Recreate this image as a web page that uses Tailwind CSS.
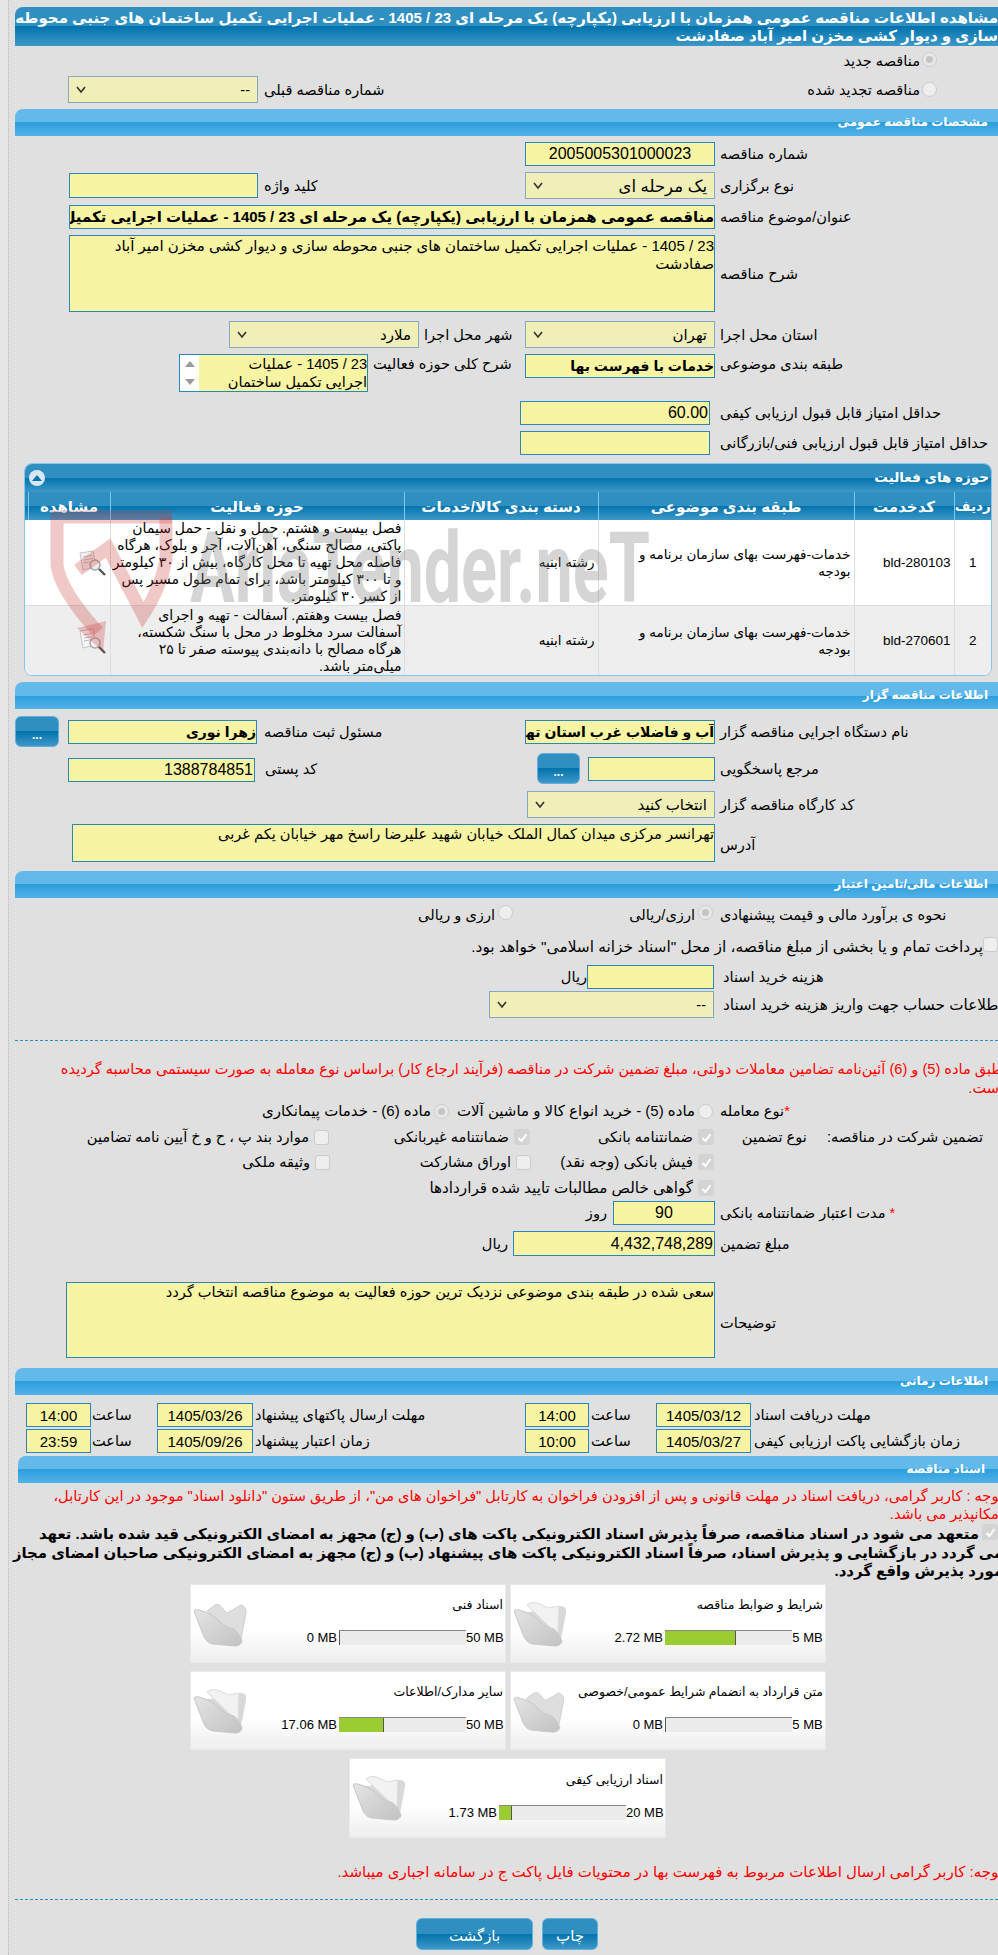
<!DOCTYPE html>
<html lang="fa" dir="rtl">
<head>
<meta charset="UTF-8">
<title>مشاهده اطلاعات مناقصه</title>
<script src="https://cdn.jsdelivr.net/npm/@tailwindcss/browser@4"></script>
</head>
<body class="bg-[#e6e6e6] overflow-hidden w-[998px] h-[1955px] relative font-['Liberation_Sans','DejaVu_Sans',sans-serif] text-[14.6px] text-black leading-[18px]">
<div dir="ltr" class="w-[998px] h-[1955px] overflow-hidden">
<div dir="rtl" class="ml-[8px] w-[995px] h-[1955px] border-l border-dotted border-[#bbbbbb] bg-[#e0e0e0] pl-[6px] pt-[7px]">
<div class="w-[988px]">

  <!-- title -->
  <div class="h-[39px] rounded-tl-[8px] bg-[linear-gradient(#2f8fc1_0%,#2f8fc1_50%,#0273ad_50%,#3e98c8_100%)] text-white font-bold text-[15px] leading-[18px] whitespace-nowrap pt-[2px] pr-[5px]">
    <div>مشاهده اطلاعات مناقصه عمومی همزمان با ارزیابی (یکپارچه) یک مرحله ای 23 / 1405 - عملیات اجرایی تکمیل ساختمان های جنبی محوطه</div>
    <div>سازی و دیوار کشی مخزن امیر آباد صفادشت</div>
  </div>

  <!-- new / renewed -->
  <div class="flex items-center h-[15px] mt-[6px] pr-[66px]">
    <span class="w-[15px] h-[15px] rounded-full border border-[#cccccc] bg-[#e8e8e8] flex items-center justify-center"><span class="w-[7px] h-[7px] rounded-full bg-[#c4c4c4]"></span></span>
    <span class="mr-[2px] mt-[3px]">مناقصه جدید</span>
  </div>
  <div class="flex items-center h-[27px] mt-[9px]">
    <div class="w-[283px] flex items-center pr-[66px]">
      <span class="w-[15px] h-[15px] rounded-full border border-[#cccccc] bg-[#eeeeee]"></span>
      <span class="mr-[2px] whitespace-nowrap">مناقصه تجدید شده</span>
    </div>
    <div class="w-[196px]"></div>
    <div class="w-[260px] text-left">شماره مناقصه قبلی</div>
    <div class="mr-[6px] w-[190px] h-[27px] border border-[#86a9c0] bg-[#f0efb8] flex items-center justify-between px-[7px]"><span>--</span><svg class="w-[10px] h-[8px]" viewBox="0 0 10 8"><path d="M1 1l4 5 4-5" fill="none" stroke="#333" stroke-width="1.6"/></svg></div>
  </div>

  <!-- general -->
  <div class="h-[27px] mt-[6px] rounded-tl-[8px] bg-[linear-gradient(#62b9ea_0%,#62b9ea_50%,#2c9edb_50%,#52b2e8_100%)] text-white font-bold text-[12px] leading-[27px] pr-[15px]">مشخصات مناقصه عمومی</div>

  <div class="flex items-center h-[24px] mt-[6px]">
    <div class="w-[283px] text-left">شماره مناقصه</div>
    <input readonly value="2005005301000023" class="mr-[5px] w-[190px] h-[24px] border border-[#2d86b8] bg-[#f7f4a3] text-center text-[16px]">
  </div>
  <div class="flex items-center h-[27px] mt-[6px]">
    <div class="w-[283px] text-left">نوع برگزاری</div>
    <div class="mr-[5px] w-[190px] h-[27px] border border-[#86a9c0] bg-[#f0efb8] flex items-center justify-between px-[7px] text-[16.5px]"><span>یک مرحله ای</span><svg class="w-[10px] h-[8px]" viewBox="0 0 10 8"><path d="M1 1l4 5 4-5" fill="none" stroke="#333" stroke-width="1.6"/></svg></div>
    <div class="w-[261px] text-left">کلید واژه</div>
    <input readonly class="mr-[6px] w-[189px] h-[25px] border border-[#2d86b8] bg-[#f7f4a3]">
  </div>
  <div class="flex items-center h-[24px] mt-[6px]">
    <div class="w-[283px] text-left">عنوان/موضوع مناقصه</div>
    <input readonly value="مناقصه عمومی همزمان با ارزیابی (یکپارچه) یک مرحله ای 23 / 1405 - عملیات اجرایی تکمیل ساختمان های جنبی محوطه سازی" class="mr-[5px] w-[646px] h-[24px] border border-[#2d86b8] bg-[#f7f4a3] font-bold text-[15px]">
  </div>
  <div class="flex items-center h-[77px] mt-[6px]">
    <div class="w-[283px] text-left">شرح مناقصه</div>
    <div class="mr-[5px] w-[646px] h-[77px] border border-[#2d86b8] bg-[#f7f4a3] text-[15px] leading-[18px] pt-[1px]">23 / 1405 - عملیات اجرایی تکمیل ساختمان های جنبی محوطه سازی و دیوار کشی مخزن امیر آباد<br>صفادشت</div>
  </div>
  <div class="flex items-center h-[27px] mt-[9px]">
    <div class="w-[283px] text-left">استان محل اجرا</div>
    <div class="mr-[5px] w-[190px] h-[27px] border border-[#86a9c0] bg-[#f0efb8] flex items-center justify-between px-[7px] text-[15px]"><span>تهران</span><svg class="w-[10px] h-[8px]" viewBox="0 0 10 8"><path d="M1 1l4 5 4-5" fill="none" stroke="#333" stroke-width="1.6"/></svg></div>
    <div class="w-[101px] text-left whitespace-nowrap">شهر محل اجرا</div>
    <div class="mr-[5px] w-[190px] h-[27px] border border-[#86a9c0] bg-[#f0efb8] flex items-center justify-between px-[7px] text-[15px]"><span>ملارد</span><svg class="w-[10px] h-[8px]" viewBox="0 0 10 8"><path d="M1 1l4 5 4-5" fill="none" stroke="#333" stroke-width="1.6"/></svg></div>
  </div>
  <div class="flex items-start h-[38px] mt-[6px]">
    <div class="w-[283px] text-left pt-[1px]">طبقه بندی موضوعی</div>
    <input readonly value="خدمات با فهرست بها" class="mr-[5px] w-[190px] h-[24px] border border-[#2d86b8] bg-[#f7f4a3] font-bold text-[14px]">
    <div class="w-[152px] text-left pt-[1px] whitespace-nowrap">شرح کلی حوزه فعالیت</div>
    <div dir="rtl" class="mr-[5px] w-[189px] h-[38px] border border-[#2d86b8] bg-[#f7f4a3] flex overflow-hidden">
      <div class="flex-1 leading-[18px] whitespace-nowrap">23 / 1405 - عملیات<br>اجرایی تکمیل ساختمان</div>
      <div class="w-[19px] bg-white flex flex-col justify-between items-center py-[6px]">
        <svg class="w-[10px] h-[6px]" viewBox="0 0 10 6"><path d="M5 0l5 6H0z" fill="#9a9a9a"/></svg>
        <svg class="w-[10px] h-[6px]" viewBox="0 0 10 6"><path d="M5 6L0 0h10z" fill="#9a9a9a"/></svg>
      </div>
    </div>
  </div>
  <div class="flex items-center h-[24px] mt-[9px]">
    <div class="w-[283px] text-left">حداقل امتیاز قابل قبول ارزیابی کیفی</div>
    <input readonly value="60.00" class="mr-[10px] w-[190px] h-[24px] border border-[#2d86b8] bg-[#f7f4a3] text-right text-[16px] px-[1px]">
  </div>
  <div class="flex items-center h-[24px] mt-[6px]">
    <div class="w-[283px] text-left whitespace-nowrap">حداقل امتیاز قابل قبول ارزیابی فنی/بازرگانی</div>
    <input readonly class="mr-[10px] w-[190px] h-[24px] border border-[#2d86b8] bg-[#f7f4a3]">
  </div>

  <!-- activities panel -->
  <div class="mt-[8px] mr-[11px] w-[968px] h-[213px] border border-[#86c6ea] rounded-[8px] overflow-hidden bg-white">
    <div class="h-[28px] bg-[linear-gradient(#2f8fc1_0%,#2f8fc1_50%,#0273ad_50%,#3e98c8_100%)] text-white font-bold text-[13.5px] leading-[28px] flex items-center justify-between pr-[2px] pl-[4px]">
      <span>حوزه های فعالیت</span>
      <span class="w-[16px] h-[16px] rounded-full bg-[#d6e7f5] flex items-center justify-center"><svg class="w-[10px] h-[6px]" viewBox="0 0 10 6"><path d="M5 0l5 6H0z" fill="#0b74ad"/></svg></span>
    </div>
    <table class="w-[966px] table-fixed border-collapse text-[13.5px] leading-[17px]">
      <colgroup><col class="w-[37px]"><col class="w-[100px]"><col class="w-[256px]"><col class="w-[194px]"><col class="w-[294px]"><col class="w-[82px]"><col class="w-[3px]"></colgroup>
      <thead class="bg-[linear-gradient(#2f8fc1_0%,#2f8fc1_50%,#0273ad_50%,#3e98c8_100%)] text-white text-[15px]">
        <tr class="h-[28px]">
          <th class="border-l border-[#7cc8f0] font-bold whitespace-nowrap text-[13.5px]">ردیف</th>
          <th class="border-l border-[#7cc8f0] font-bold whitespace-nowrap">کدخدمت</th>
          <th class="border-l border-[#7cc8f0] font-bold whitespace-nowrap">طبقه بندی موضوعی</th>
          <th class="border-l border-[#7cc8f0] font-bold whitespace-nowrap">دسته بندی کالا/خدمات</th>
          <th class="border-l border-[#7cc8f0] font-bold whitespace-nowrap">حوزه فعالیت</th>
          <th class="border-l border-[#7cc8f0] font-bold whitespace-nowrap">مشاهده</th>
          <th></th>
        </tr>
      </thead>
      <tbody>
        <tr class="h-[85px] bg-white border-b border-[#dddddd]">
          <td class="border-l border-[#dddddd] text-center">1</td>
          <td dir="ltr" class="border-l border-[#dddddd] text-right pr-[3px]">bld-280103</td>
          <td class="border-l border-[#dddddd] pr-[3px]">خدمات-فهرست بهای سازمان برنامه و<br>بودجه</td>
          <td class="border-l border-[#dddddd] pr-[3px]">رشته ابنیه</td>
          <td class="border-l border-[#dddddd] pr-[2px] whitespace-nowrap text-[14px]">فصل بیست و هشتم. حمل و نقل - حمل سیمان<br>پاکتی، مصالح سنگی، آهن‌آلات، آجر و بلوک، هرگاه<br>فاصله محل تهیه تا محل کارگاه، بیش از ۳۰ کیلومتر<br>و تا ۳۰۰ کیلومتر باشد، برای تمام طول مسیر پس<br>از کسر ۳۰ کیلومتر.</td>
          <td><svg class="block w-[30px] h-[26px] mr-[2px]" viewBox="0 0 30 26"><path d="M2 3l13-2 3 16-13 3z" fill="#f0f0f0" stroke="#c4c4c4"/><path d="M5 7l9-1.5M6 10l9-1.5M6 13l6-1" stroke="#bdbdbd"/><circle cx="17" cy="15" r="5" fill="#ececec" stroke="#a8a8a8" stroke-width="1.5"/><path d="M21 19l6 6" stroke="#555" stroke-width="2.4"/></svg></td>
          <td></td>
        </tr>
        <tr class="h-[70px] bg-[#eeeeee]">
          <td class="border-l border-[#dddddd] text-center">2</td>
          <td dir="ltr" class="border-l border-[#dddddd] text-right pr-[3px]">bld-270601</td>
          <td class="border-l border-[#dddddd] pr-[3px]">خدمات-فهرست بهای سازمان برنامه و<br>بودجه</td>
          <td class="border-l border-[#dddddd] pr-[3px]">رشته ابنیه</td>
          <td class="border-l border-[#dddddd] pr-[2px] whitespace-nowrap text-[14px]">فصل بیست وهفتم. آسفالت - تهیه و اجرای<br>آسفالت سرد مخلوط در محل با سنگ شکسته،<br>هرگاه مصالح با دانه‌بندی پیوسته صفر تا ۲۵<br>میلی‌متر باشد.</td>
          <td><svg class="block w-[30px] h-[26px] mr-[2px]" viewBox="0 0 30 26"><path d="M2 3l13-2 3 16-13 3z" fill="#f8f8f8" stroke="#c4c4c4"/><path d="M5 7l9-1.5M6 10l9-1.5M6 13l6-1" stroke="#bdbdbd"/><circle cx="17" cy="15" r="5" fill="#f4f4f4" stroke="#a8a8a8" stroke-width="1.5"/><path d="M21 19l6 6" stroke="#555" stroke-width="2.4"/></svg></td>
          <td></td>
        </tr>
      </tbody>
    </table>
  </div>

  <!-- organizer -->
  <div class="h-[27px] mt-[6px] rounded-tl-[8px] bg-[linear-gradient(#62b9ea_0%,#62b9ea_50%,#2c9edb_50%,#52b2e8_100%)] text-white font-bold text-[12px] leading-[27px] pr-[15px]">اطلاعات مناقصه گزار</div>

  <div class="flex items-center h-[31px] mt-[7px]">
    <div class="w-[283px] text-left">نام دستگاه اجرایی مناقصه گزار</div>
    <input readonly value="آب و فاضلاب غرب استان تهران" class="mr-[5px] w-[190px] h-[24px] border border-[#2d86b8] bg-[#f7f4a3] font-bold text-[14px]">
    <div class="w-[261px] text-left">مسئول ثبت مناقصه</div>
    <input readonly value="زهرا نوری" class="mr-[7px] w-[189px] h-[24px] border border-[#2d86b8] bg-[#f7f4a3] font-bold text-[14px]">
    <div class="mr-[9px] w-[44px] h-[31px] rounded-[6px] border border-[#5fb0dd] bg-[linear-gradient(#2f8fc1_0%,#2f8fc1_50%,#0273ad_50%,#3e98c8_100%)] text-white font-bold text-[12px] text-center leading-[36px]">...</div>
  </div>
  <div class="flex items-center h-[31px] mt-[6px]">
    <div class="w-[283px] text-left">مرجع پاسخگویی</div>
    <input readonly class="mr-[5px] w-[127px] h-[24px] border border-[#2d86b8] bg-[#f7f4a3]">
    <div class="mr-[8px] w-[43px] h-[31px] rounded-[6px] border border-[#5fb0dd] bg-[linear-gradient(#2f8fc1_0%,#2f8fc1_50%,#0273ad_50%,#3e98c8_100%)] text-white font-bold text-[12px] text-center leading-[36px]">...</div>
    <div class="w-[282px] text-left pl-[10px]">کد پستی</div>
    <input readonly value="1388784851" class="w-[187px] h-[24px] mt-[3px] border border-[#2d86b8] bg-[#f7f4a3] text-right text-[16px] px-[1px]">
  </div>
  <div class="flex items-center h-[27px] mt-[7px]">
    <div class="w-[283px] text-left">کد کارگاه مناقصه گزار</div>
    <div class="mr-[5px] w-[188px] h-[27px] border border-[#86a9c0] bg-[#f0efb8] flex items-center justify-between px-[7px] text-[15px]"><span>انتخاب کنید</span><svg class="w-[10px] h-[8px]" viewBox="0 0 10 8"><path d="M1 1l4 5 4-5" fill="none" stroke="#333" stroke-width="1.6"/></svg></div>
  </div>
  <div class="flex items-center h-[38px] mt-[6px]">
    <div class="w-[283px] text-left pt-[4px]">آدرس</div>
    <div class="mr-[5px] w-[643px] h-[38px] border border-[#2d86b8] bg-[#f7f4a3]">تهرانسر مرکزی میدان کمال الملک خیابان شهید علیرضا راسخ مهر خیابان یکم غربی</div>
  </div>

  <!-- finance -->
  <div class="h-[27px] mt-[9px] rounded-tl-[8px] bg-[linear-gradient(#62b9ea_0%,#62b9ea_50%,#2c9edb_50%,#52b2e8_100%)] text-white font-bold text-[12px] leading-[27px] pr-[15px]">اطلاعات مالی/تامین اعتبار</div>

  <div class="flex items-center h-[20px] mt-[7px]">
    <div class="w-[283px] text-left whitespace-nowrap">نحوه ی برآورد مالی و قیمت پیشنهادی</div>
    <div class="w-[207px] flex items-center pr-[7px]">
      <span class="w-[15px] h-[15px] rounded-full border border-[#cccccc] bg-[#e8e8e8] flex items-center justify-center -mt-[6px]"><span class="w-[7px] h-[7px] rounded-full bg-[#c4c4c4]"></span></span>
      <span class="mr-[3px]">ارزی/ریالی</span>
    </div>
    <span class="w-[15px] h-[15px] rounded-full border border-[#cccccc] bg-[#eeeeee] -mt-[6px]"></span>
    <span class="mr-[3px]">ارزی و ریالی</span>
  </div>
  <div class="flex items-center h-[20px] mt-[12px] pr-[5px] text-[15.4px]">
    <span class="w-[15px] h-[15px] rounded-[3px] border border-[#cccccc] bg-[#eeeeee] -mt-[6px]"></span>
    <span>پرداخت تمام و یا بخشی از مبلغ مناقصه، از محل "اسناد خزانه اسلامی" خواهد بود.</span>
  </div>
  <div class="flex items-center h-[24px] mt-[8px]">
    <div class="w-[280px] text-left">هزینه خرید اسناد</div>
    <input readonly class="mr-[9px] w-[127px] h-[24px] border border-[#2d86b8] bg-[#f7f4a3]">
    <span>ریال</span>
  </div>
  <div class="flex items-center h-[27px] mt-[2px]">
    <div class="w-[280px] text-left whitespace-nowrap text-[15.2px]">اطلاعات حساب جهت واریز هزینه خرید اسناد</div>
    <div class="mr-[9px] w-[225px] h-[27px] border border-[#86a9c0] bg-[#f0efb8] flex items-center justify-between px-[7px]"><span>--</span><svg class="w-[10px] h-[8px]" viewBox="0 0 10 8"><path d="M1 1l4 5 4-5" fill="none" stroke="#333" stroke-width="1.6"/></svg></div>
  </div>

  <div class="mt-[22px] border-t border-dashed border-[#2f8fc1]"></div>

  <div class="mt-[19px] text-[#ff0000] leading-[19px] h-[38px] whitespace-nowrap">
    <div>طبق ماده (5) و (6) آئین‌نامه تضامین معاملات دولتی، مبلغ تضمین شرکت در مناقصه (فرآیند ارجاع کار) براساس نوع معامله به صورت سیستمی محاسبه گردیده</div>
    <div>است.</div>
  </div>

  <div class="flex items-center h-[20px] mt-[3px]">
    <div class="w-[283px] text-left"><span class="text-[#ff0000]">*</span>نوع معامله</div>
    <div class="w-[207px] flex items-center pr-[7px] text-[15px]">
      <span class="w-[15px] h-[15px] rounded-full border border-[#cccccc] bg-[#eeeeee] shrink-0"></span>
      <span class="mr-[3px] whitespace-nowrap">ماده (5) - خرید انواع کالا و ماشین آلات</span>
    </div>
    <span class="w-[15px] h-[15px] rounded-full border border-[#cccccc] bg-[#e8e8e8] flex items-center justify-center mr-[64px]"><span class="w-[7px] h-[7px] rounded-full bg-[#c4c4c4]"></span></span>
    <span class="mr-[3px] whitespace-nowrap text-[15px]">ماده (6) - خدمات پیمانکاری</span>
  </div>
  <div class="flex items-center h-[20px] mt-[6px]">
    <div class="w-[283px] flex pr-[20px] whitespace-nowrap"><span>تضمین شرکت در مناقصه:</span><span class="mr-[20px]">نوع تضمین</span></div>
    <div class="w-[189px] flex items-center pr-[6px]">
      <span class="w-[16px] h-[16px] rounded-[3px] bg-[#d4d4d4] flex items-center justify-center"><svg class="w-[11px] h-[11px]" viewBox="0 0 11 11"><path d="M1.5 6l3 3 5-7" fill="none" stroke="#fff" stroke-width="2"/></svg></span>
      <span class="mr-[5px] whitespace-nowrap">ضمانتنامه بانکی</span>
    </div>
    <div class="w-[202px] flex items-center pr-[1px]">
      <span class="w-[16px] h-[16px] rounded-[3px] bg-[#d4d4d4] flex items-center justify-center"><svg class="w-[11px] h-[11px]" viewBox="0 0 11 11"><path d="M1.5 6l3 3 5-7" fill="none" stroke="#fff" stroke-width="2"/></svg></span>
      <span class="mr-[5px] whitespace-nowrap">ضمانتنامه غیربانکی</span>
    </div>
    <span class="w-[15px] h-[15px] rounded-[3px] border border-[#cccccc] bg-[#eeeeee]"></span>
    <span class="mr-[5px] whitespace-nowrap">موارد بند پ ، ح و خ آیین نامه تضامین</span>
  </div>
  <div class="flex items-center h-[20px] mt-[5px]">
    <div class="w-[283px]"></div>
    <div class="w-[189px] flex items-center pr-[6px]">
      <span class="w-[16px] h-[16px] rounded-[3px] bg-[#d4d4d4] flex items-center justify-center"><svg class="w-[11px] h-[11px]" viewBox="0 0 11 11"><path d="M1.5 6l3 3 5-7" fill="none" stroke="#fff" stroke-width="2"/></svg></span>
      <span class="mr-[5px] whitespace-nowrap text-[15.2px]">فیش بانکی (وجه نقد)</span>
    </div>
    <div class="w-[201px] flex items-center">
      <span class="w-[15px] h-[15px] rounded-[3px] border border-[#cccccc] bg-[#eeeeee]"></span>
      <span class="mr-[5px] whitespace-nowrap">اوراق مشارکت</span>
    </div>
    <span class="w-[15px] h-[15px] rounded-[3px] border border-[#cccccc] bg-[#eeeeee]"></span>
    <span class="mr-[5px] whitespace-nowrap">وثیقه ملکی</span>
  </div>
  <div class="flex items-center h-[20px] mt-[6px]">
    <div class="w-[283px]"></div>
    <div class="flex items-center pr-[6px]">
      <span class="w-[16px] h-[16px] rounded-[3px] bg-[#d4d4d4] flex items-center justify-center"><svg class="w-[11px] h-[11px]" viewBox="0 0 11 11"><path d="M1.5 6l3 3 5-7" fill="none" stroke="#fff" stroke-width="2"/></svg></span>
      <span class="mr-[5px] whitespace-nowrap text-[15.2px]">گواهی خالص مطالبات تایید شده قراردادها</span>
    </div>
  </div>
  <div class="flex items-center h-[24px] mt-[3px]">
    <div class="w-[283px] text-left"><span class="text-[#ff0000]">*</span> مدت اعتبار ضمانتنامه بانکی</div>
    <input readonly value="90" class="mr-[5px] w-[102px] h-[24px] border border-[#2d86b8] bg-[#f7f4a3] text-center text-[16px]">
    <span class="mr-[6px]">روز</span>
  </div>
  <div class="flex items-center h-[25px] mt-[6px]">
    <div class="w-[283px] text-left">مبلغ تضمین</div>
    <input readonly value="4,432,748,289" class="mr-[5px] w-[202px] h-[25px] border border-[#2d86b8] bg-[#f7f4a3] text-right text-[16px] px-[1px]">
    <span class="mr-[5px]">ریال</span>
  </div>
  <div class="flex items-center h-[76px] mt-[26px]">
    <div class="w-[283px] text-left pt-[6px]">توضیحات</div>
    <div class="mr-[5px] w-[649px] h-[76px] border border-[#2d86b8] bg-[#f7f4a3]">سعی شده در طبقه بندی موضوعی نزدیک ترین حوزه فعالیت به موضوع مناقصه انتخاب گردد</div>
  </div>

  <!-- dates -->
  <div class="h-[27px] mt-[10px] rounded-tl-[8px] bg-[linear-gradient(#62b9ea_0%,#62b9ea_50%,#2c9edb_50%,#52b2e8_100%)] text-white font-bold text-[12px] leading-[27px] pr-[15px]">اطلاعات زمانی</div>

  <div class="flex items-center h-[24px] mt-[8px]">
    <div class="w-[249px] text-left">مهلت دریافت اسناد</div>
    <input readonly value="1405/03/12" class="mr-[3px] w-[95px] h-[24px] border border-[#2d86b8] bg-[#f7f4a3] text-center text-[15px]">
    <div class="w-[67px] text-left pl-[2px]">ساعت</div>
    <input readonly value="14:00" class="w-[64px] h-[24px] border border-[#2d86b8] bg-[#f7f4a3] text-center text-[15px]">
    <div class="w-[270px] text-left">مهلت ارسال پاکتهای پیشنهاد</div>
    <input readonly value="1405/03/26" class="mr-[2px] w-[96px] h-[24px] border border-[#2d86b8] bg-[#f7f4a3] text-center text-[15px]">
    <div class="w-[66px] text-left pl-[1px]">ساعت</div>
    <input readonly value="14:00" class="w-[65px] h-[24px] border border-[#2d86b8] bg-[#f7f4a3] text-center text-[15px]">
  </div>
  <div class="flex items-center h-[24px] mt-[2px]">
    <div class="w-[249px] text-left whitespace-nowrap">زمان بازگشایی پاکت ارزیابی کیفی</div>
    <input readonly value="1405/03/27" class="mr-[3px] w-[95px] h-[24px] border border-[#2d86b8] bg-[#f7f4a3] text-center text-[15px]">
    <div class="w-[67px] text-left pl-[2px]">ساعت</div>
    <input readonly value="10:00" class="w-[64px] h-[24px] border border-[#2d86b8] bg-[#f7f4a3] text-center text-[15px]">
    <div class="w-[270px] text-left">زمان اعتبار پیشنهاد</div>
    <input readonly value="1405/09/26" class="mr-[2px] w-[96px] h-[24px] border border-[#2d86b8] bg-[#f7f4a3] text-center text-[15px]">
    <div class="w-[66px] text-left pl-[1px]">ساعت</div>
    <input readonly value="23:59" class="w-[65px] h-[24px] border border-[#2d86b8] bg-[#f7f4a3] text-center text-[15px]">
  </div>

  <!-- documents -->
  <div class="h-[27px] w-[985px] mt-[3px] rounded-tl-[8px] bg-[linear-gradient(#62b9ea_0%,#62b9ea_50%,#2c9edb_50%,#52b2e8_100%)] text-white font-bold text-[12px] leading-[27px] pr-[18px]">اسناد مناقصه</div>

  <div class="mt-[4px] text-[#ff0000] whitespace-nowrap h-[36px]">
    <div>توجه : کاربر گرامی، دریافت اسناد در مهلت قانونی و پس از افزودن فراخوان به کارتابل "فراخوان های من"، از طریق ستون "دانلود اسناد" موجود در این کارتابل،</div>
    <div>امکانپذیر می باشد.</div>
  </div>
  <div class="mt-[2px] pr-[5px] font-bold text-[14.9px] leading-[18.5px] whitespace-nowrap h-[56px]">
    <div class="flex"><span class="w-[16px] h-[16px] rounded-[3px] bg-[#d4d4d4] flex items-center justify-center mt-[-1px] ml-[3px] shrink-0"><svg class="w-[11px] h-[11px]" viewBox="0 0 11 11"><path d="M1.5 6l3 3 5-7" fill="none" stroke="#fff" stroke-width="2"/></svg></span><span>متعهد می شود در اسناد مناقصه، صرفاً پذیرش اسناد الکترونیکی پاکت های (ب) و (ج) مجهز به امضای الکترونیکی قید شده باشد. تعهد</span></div>
    <div class="-mr-[5px]">می گردد در بازگشایی و پذیرش اسناد، صرفاً اسناد الکترونیکی پاکت های پیشنهاد (ب) و (ج) مجهز به امضای الکترونیکی صاحبان امضای مجاز</div>
    <div class="-mr-[5px]">مورد پذیرش واقع گردد.</div>
  </div>

  <!-- files -->
  <svg class="w-0 h-0 block"><defs><linearGradient id="fold" x1="0" y1="0" x2="1" y2="1"><stop offset="0" stop-color="#e4e4e4"/><stop offset="1" stop-color="#c2c2c2"/></linearGradient></defs></svg>
  <div class="flex gap-[4px] mr-[177px] mt-[3px]">
    <div class="w-[316px] h-[79px] flex bg-[linear-gradient(#ffffff_0%,#ffffff_60%,#eeeeee_100%)] border border-[#e9e9e9]">
      <div class="flex-1 pr-[2px]">
        <div class="text-[12.5px] h-[18px] mt-[11px] whitespace-nowrap">شرایط و ضوابط مناقصه</div>
        <div class="flex items-center h-[15px] mt-[16px] text-[13px]">
          <span dir="ltr" class="w-[31px] text-center whitespace-nowrap">5 MB</span>
          <div dir="ltr" class="w-[127px] h-[15px] bg-[#ececec] border-t border-[#888888] flex"><div class="w-[71px] bg-[#9acd32] border-r border-[#555555]"></div></div>
          <span dir="ltr" class="mr-[2px] whitespace-nowrap">2.72 MB</span>
        </div>
      </div>
      <svg class="w-[70px] h-[70px] mt-[6px]" viewBox="0 0 70 70"><path d="M13 22L50 15Q56 15 55 22L50 48z" fill="#d8d8d8"/><path d="M16 14Q20 10 26 12L38 17L48 15L47 44z" fill="#f2f2f2" stroke="#dcdcdc"/><path d="M3 20Q4 18 8 19L17 22Q24 25 30 32Q36 37 43 38Q48 42 51 50Q50 55 44 55L22 53Q16 52 13 46z" fill="url(#fold)" stroke="#c8c8c8"/></svg>
    </div>
    <div class="w-[316px] h-[79px] flex bg-[linear-gradient(#ffffff_0%,#ffffff_60%,#eeeeee_100%)] border border-[#e9e9e9]">
      <div class="flex-1 pr-[2px]">
        <div class="text-[12.5px] h-[18px] mt-[11px] whitespace-nowrap">اسناد فنی</div>
        <div class="flex items-center h-[15px] mt-[16px] text-[13px]">
          <span dir="ltr" class="w-[37px] text-center whitespace-nowrap">50 MB</span>
          <div dir="ltr" class="w-[127px] h-[15px] bg-[#ececec] border-t border-[#888888] flex"><div class="w-[1px] bg-[#555555]"></div></div>
          <span dir="ltr" class="mr-[2px] whitespace-nowrap">0 MB</span>
        </div>
      </div>
      <svg class="w-[70px] h-[70px] mt-[6px]" viewBox="0 0 70 70"><path d="M16 20L24 14Q28 12 32 18L36 22L50 14Q56 16 55 22L50 48z" fill="#dedede" stroke="#d0d0d0"/><path d="M3 20Q4 18 8 19L17 22Q24 25 30 32Q36 37 43 38Q48 42 51 50Q50 55 44 55L22 53Q16 52 13 46z" fill="url(#fold)" stroke="#c8c8c8"/></svg>
    </div>
  </div>
  <div class="flex gap-[4px] mr-[177px] mt-[8px]">
    <div class="w-[316px] h-[79px] flex bg-[linear-gradient(#ffffff_0%,#ffffff_60%,#eeeeee_100%)] border border-[#e9e9e9]">
      <div class="flex-1 pr-[2px]">
        <div class="text-[12.5px] h-[18px] mt-[11px] whitespace-nowrap">متن قرارداد به انضمام شرایط عمومی/خصوصی</div>
        <div class="flex items-center h-[15px] mt-[16px] text-[13px]">
          <span dir="ltr" class="w-[31px] text-center whitespace-nowrap">5 MB</span>
          <div dir="ltr" class="w-[127px] h-[15px] bg-[#ececec] border-t border-[#888888] flex"><div class="w-[1px] bg-[#555555]"></div></div>
          <span dir="ltr" class="mr-[2px] whitespace-nowrap">0 MB</span>
        </div>
      </div>
      <svg class="w-[70px] h-[70px] mt-[6px]" viewBox="0 0 70 70"><path d="M16 20L24 14Q28 12 32 18L36 22L50 14Q56 16 55 22L50 48z" fill="#dedede" stroke="#d0d0d0"/><path d="M3 20Q4 18 8 19L17 22Q24 25 30 32Q36 37 43 38Q48 42 51 50Q50 55 44 55L22 53Q16 52 13 46z" fill="url(#fold)" stroke="#c8c8c8"/></svg>
    </div>
    <div class="w-[316px] h-[79px] flex bg-[linear-gradient(#ffffff_0%,#ffffff_60%,#eeeeee_100%)] border border-[#e9e9e9]">
      <div class="flex-1 pr-[2px]">
        <div class="text-[12.5px] h-[18px] mt-[11px] whitespace-nowrap">سایر مدارک/اطلاعات</div>
        <div class="flex items-center h-[15px] mt-[16px] text-[13px]">
          <span dir="ltr" class="w-[37px] text-center whitespace-nowrap">50 MB</span>
          <div dir="ltr" class="w-[127px] h-[15px] bg-[#ececec] border-t border-[#888888] flex"><div class="w-[45px] bg-[#9acd32] border-r border-[#555555]"></div></div>
          <span dir="ltr" class="mr-[2px] whitespace-nowrap">17.06 MB</span>
        </div>
      </div>
      <svg class="w-[70px] h-[70px] mt-[6px]" viewBox="0 0 70 70"><path d="M13 22L50 15Q56 15 55 22L50 48z" fill="#d8d8d8"/><path d="M16 14Q20 10 26 12L38 17L48 15L47 44z" fill="#f2f2f2" stroke="#dcdcdc"/><path d="M3 20Q4 18 8 19L17 22Q24 25 30 32Q36 37 43 38Q48 42 51 50Q50 55 44 55L22 53Q16 52 13 46z" fill="url(#fold)" stroke="#c8c8c8"/></svg>
    </div>
  </div>
  <div class="flex mr-[337px] mt-[8px]">
    <div class="w-[317px] h-[80px] flex bg-[linear-gradient(#ffffff_0%,#ffffff_60%,#eeeeee_100%)] border border-[#e9e9e9]">
      <div class="flex-1 pr-[2px]">
        <div class="text-[12.5px] h-[18px] mt-[12px] whitespace-nowrap">اسناد ارزیابی کیفی</div>
        <div class="flex items-center h-[15px] mt-[16px] text-[13px]">
          <span dir="ltr" class="w-[37px] text-center whitespace-nowrap">20 MB</span>
          <div dir="ltr" class="w-[127px] h-[15px] bg-[#ececec] border-t border-[#888888] flex"><div class="w-[13px] bg-[#9acd32] border-r border-[#555555]"></div></div>
          <span dir="ltr" class="mr-[2px] whitespace-nowrap">1.73 MB</span>
        </div>
      </div>
      <svg class="w-[70px] h-[70px] mt-[6px]" viewBox="0 0 70 70"><path d="M13 22L50 15Q56 15 55 22L50 48z" fill="#d8d8d8"/><path d="M16 14Q20 10 26 12L38 17L48 15L47 44z" fill="#f2f2f2" stroke="#dcdcdc"/><path d="M3 20Q4 18 8 19L17 22Q24 25 30 32Q36 37 43 38Q48 42 51 50Q50 55 44 55L22 53Q16 52 13 46z" fill="url(#fold)" stroke="#c8c8c8"/></svg>
    </div>
  </div>

  <div class="mt-[25px] text-[#ff0000] h-[18px] whitespace-nowrap text-[15px]">توجه: کاربر گرامی ارسال اطلاعات مربوط به فهرست بها در محتویات فایل پاکت ج در سامانه اجباری میباشد.</div>

  <div class="mt-[18px] border-t border-dashed border-[#2f8fc1]"></div>

  <div class="flex gap-[9px] mr-[405px] mt-[18px]">
    <div class="w-[56px] h-[32px] rounded-[6px] border border-[#5fb0dd] bg-[linear-gradient(#2f8fc1_0%,#2f8fc1_50%,#0273ad_50%,#3e98c8_100%)] text-white text-[15px] text-center leading-[34px]">چاپ</div>
    <div class="w-[117px] h-[32px] rounded-[6px] border border-[#5fb0dd] bg-[linear-gradient(#2f8fc1_0%,#2f8fc1_50%,#0273ad_50%,#3e98c8_100%)] text-white text-[15px] text-center leading-[34px]">بازگشت</div>
  </div>
</div>
</div>
</div>

<!-- watermark -->
<svg class="absolute left-[40px] top-[500px] w-[640px] h-[165px] pointer-events-none" viewBox="40 500 640 165">
  <g fill="none" stroke="#c83232" stroke-opacity="0.27" stroke-width="13">
    <path d="M172 517H57V565Q60 590 98 632"/>
    <path d="M166 517V560Q160 590 143 615L108 548L78 570"/>
  </g>
  <path d="M77 628L106 621L103 652z" fill="#c83232" fill-opacity="0.27"/>
  <text x="190" y="602" font-family="Roboto, sans-serif" font-weight="700" font-size="98" textLength="460" lengthAdjust="spacingAndGlyphs" direction="ltr" fill="#808080" fill-opacity="0.33">AriaTender.neT</text>
</svg>
</body>
</html>
